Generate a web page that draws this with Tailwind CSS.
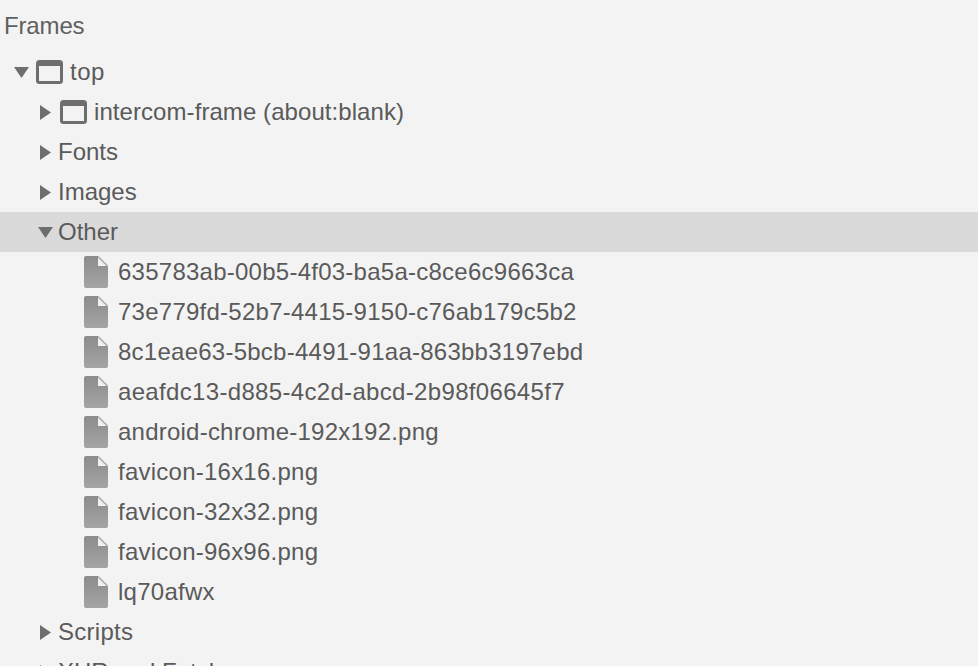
<!DOCTYPE html>
<html><head><meta charset="utf-8"><script src="https://cdn.jsdelivr.net/npm/@tailwindcss/browser@4"></script></head>
<body class="bg-[#f3f3f3] overflow-hidden">
<svg width="0" height="0" class="absolute"><defs><linearGradient id="g" x1="0" y1="0" x2="0" y2="1"><stop offset="0" stop-color="#8c8c8c"/><stop offset="1" stop-color="#a4a4a4"/></linearGradient></defs></svg>
<div class="w-[978px] h-[666px] overflow-hidden font-['Liberation_Sans',sans-serif] text-[24px] text-[#5a5a5a] whitespace-nowrap">
<div class="h-[52px] pl-[4px] pt-[9px] leading-[34px] text-[#5f5f5f] tracking-[-0.15px]">Frames</div>
<div class="h-10 flex items-center pl-[14px]"><svg width="15" height="11" viewBox="0 0 15 11" class="mr-[7px]"><path d="M0 0H15L7.5 11Z" fill="#6e6e6e"/></svg><svg width="27" height="24" viewBox="0 0 27 24" class="mr-[7px]"><rect x="1.5" y="1.5" width="24" height="21" rx="2" fill="none" stroke="#6e6e6e" stroke-width="3"/><rect x="1" y="1" width="25" height="5" rx="2" fill="#6e6e6e"/></svg><span class="tracking-[0.5px]">top</span></div>
<div class="h-10 flex items-center pl-[40px]"><svg width="11" height="15" viewBox="0 0 11 15" class="mr-[9px]"><path d="M0 0V15L11 7.5Z" fill="#6e6e6e"/></svg><svg width="27" height="24" viewBox="0 0 27 24" class="mr-[7px]"><rect x="1.5" y="1.5" width="24" height="21" rx="2" fill="none" stroke="#6e6e6e" stroke-width="3"/><rect x="1" y="1" width="25" height="5" rx="2" fill="#6e6e6e"/></svg><span class="tracking-[0.07px]">intercom-frame (about:blank)</span></div>
<div class="h-10 flex items-center pl-[40px]"><svg width="11" height="15" viewBox="0 0 11 15" class="mr-[7px]"><path d="M0 0V15L11 7.5Z" fill="#6e6e6e"/></svg><span>Fonts</span></div>
<div class="h-10 flex items-center pl-[40px]"><svg width="11" height="15" viewBox="0 0 11 15" class="mr-[7px]"><path d="M0 0V15L11 7.5Z" fill="#6e6e6e"/></svg><span>Images</span></div>
<div class="h-10 flex items-center pl-[38px] bg-[#dadada]"><svg width="15" height="11" viewBox="0 0 15 11" class="mr-[5px]"><path d="M0 0H15L7.5 11Z" fill="#6e6e6e"/></svg><span>Other</span></div>
<div class="h-10 flex items-center pl-[84px]"><svg width="24" height="32" viewBox="0 0 24 32" class="mr-[10px]"><path d="M2 0H14L24 10V30a2 2 0 0 1-2 2H2a2 2 0 0 1-2-2V2a2 2 0 0 1 2-2Z" fill="url(#g)"/><path d="M14 1.5L22.5 10H14Z" fill="#f1f1f1"/><path d="M14 0L24 10" stroke="#bdbdbd" stroke-width="1.2"/></svg><span class="tracking-[0.25px]">635783ab-00b5-4f03-ba5a-c8ce6c9663ca</span></div>
<div class="h-10 flex items-center pl-[84px]"><svg width="24" height="32" viewBox="0 0 24 32" class="mr-[10px]"><path d="M2 0H14L24 10V30a2 2 0 0 1-2 2H2a2 2 0 0 1-2-2V2a2 2 0 0 1 2-2Z" fill="url(#g)"/><path d="M14 1.5L22.5 10H14Z" fill="#f1f1f1"/><path d="M14 0L24 10" stroke="#bdbdbd" stroke-width="1.2"/></svg><span class="tracking-[0.25px]">73e779fd-52b7-4415-9150-c76ab179c5b2</span></div>
<div class="h-10 flex items-center pl-[84px]"><svg width="24" height="32" viewBox="0 0 24 32" class="mr-[10px]"><path d="M2 0H14L24 10V30a2 2 0 0 1-2 2H2a2 2 0 0 1-2-2V2a2 2 0 0 1 2-2Z" fill="url(#g)"/><path d="M14 1.5L22.5 10H14Z" fill="#f1f1f1"/><path d="M14 0L24 10" stroke="#bdbdbd" stroke-width="1.2"/></svg><span class="tracking-[0.25px]">8c1eae63-5bcb-4491-91aa-863bb3197ebd</span></div>
<div class="h-10 flex items-center pl-[84px]"><svg width="24" height="32" viewBox="0 0 24 32" class="mr-[10px]"><path d="M2 0H14L24 10V30a2 2 0 0 1-2 2H2a2 2 0 0 1-2-2V2a2 2 0 0 1 2-2Z" fill="url(#g)"/><path d="M14 1.5L22.5 10H14Z" fill="#f1f1f1"/><path d="M14 0L24 10" stroke="#bdbdbd" stroke-width="1.2"/></svg><span class="tracking-[0.33px]">aeafdc13-d885-4c2d-abcd-2b98f06645f7</span></div>
<div class="h-10 flex items-center pl-[84px]"><svg width="24" height="32" viewBox="0 0 24 32" class="mr-[10px]"><path d="M2 0H14L24 10V30a2 2 0 0 1-2 2H2a2 2 0 0 1-2-2V2a2 2 0 0 1 2-2Z" fill="url(#g)"/><path d="M14 1.5L22.5 10H14Z" fill="#f1f1f1"/><path d="M14 0L24 10" stroke="#bdbdbd" stroke-width="1.2"/></svg><span class="tracking-[0.23px]">android-chrome-192x192.png</span></div>
<div class="h-10 flex items-center pl-[84px]"><svg width="24" height="32" viewBox="0 0 24 32" class="mr-[10px]"><path d="M2 0H14L24 10V30a2 2 0 0 1-2 2H2a2 2 0 0 1-2-2V2a2 2 0 0 1 2-2Z" fill="url(#g)"/><path d="M14 1.5L22.5 10H14Z" fill="#f1f1f1"/><path d="M14 0L24 10" stroke="#bdbdbd" stroke-width="1.2"/></svg><span class="tracking-[0.24px]">favicon-16x16.png</span></div>
<div class="h-10 flex items-center pl-[84px]"><svg width="24" height="32" viewBox="0 0 24 32" class="mr-[10px]"><path d="M2 0H14L24 10V30a2 2 0 0 1-2 2H2a2 2 0 0 1-2-2V2a2 2 0 0 1 2-2Z" fill="url(#g)"/><path d="M14 1.5L22.5 10H14Z" fill="#f1f1f1"/><path d="M14 0L24 10" stroke="#bdbdbd" stroke-width="1.2"/></svg><span class="tracking-[0.24px]">favicon-32x32.png</span></div>
<div class="h-10 flex items-center pl-[84px]"><svg width="24" height="32" viewBox="0 0 24 32" class="mr-[10px]"><path d="M2 0H14L24 10V30a2 2 0 0 1-2 2H2a2 2 0 0 1-2-2V2a2 2 0 0 1 2-2Z" fill="url(#g)"/><path d="M14 1.5L22.5 10H14Z" fill="#f1f1f1"/><path d="M14 0L24 10" stroke="#bdbdbd" stroke-width="1.2"/></svg><span class="tracking-[0.24px]">favicon-96x96.png</span></div>
<div class="h-10 flex items-center pl-[84px]"><svg width="24" height="32" viewBox="0 0 24 32" class="mr-[10px]"><path d="M2 0H14L24 10V30a2 2 0 0 1-2 2H2a2 2 0 0 1-2-2V2a2 2 0 0 1 2-2Z" fill="url(#g)"/><path d="M14 1.5L22.5 10H14Z" fill="#f1f1f1"/><path d="M14 0L24 10" stroke="#bdbdbd" stroke-width="1.2"/></svg><span class="tracking-[0.25px]">lq70afwx</span></div>
<div class="h-10 flex items-center pl-[40px]"><svg width="11" height="15" viewBox="0 0 11 15" class="mr-[7px]"><path d="M0 0V15L11 7.5Z" fill="#6e6e6e"/></svg><span class="tracking-[0.28px]">Scripts</span></div>
<div class="h-10 flex items-center pl-[40px]"><svg width="11" height="15" viewBox="0 0 11 15" class="mr-[7px]"><path d="M0 0V15L11 7.5Z" fill="#6e6e6e"/></svg><span>XHR and Fetch</span></div>
</div>
</body></html>
